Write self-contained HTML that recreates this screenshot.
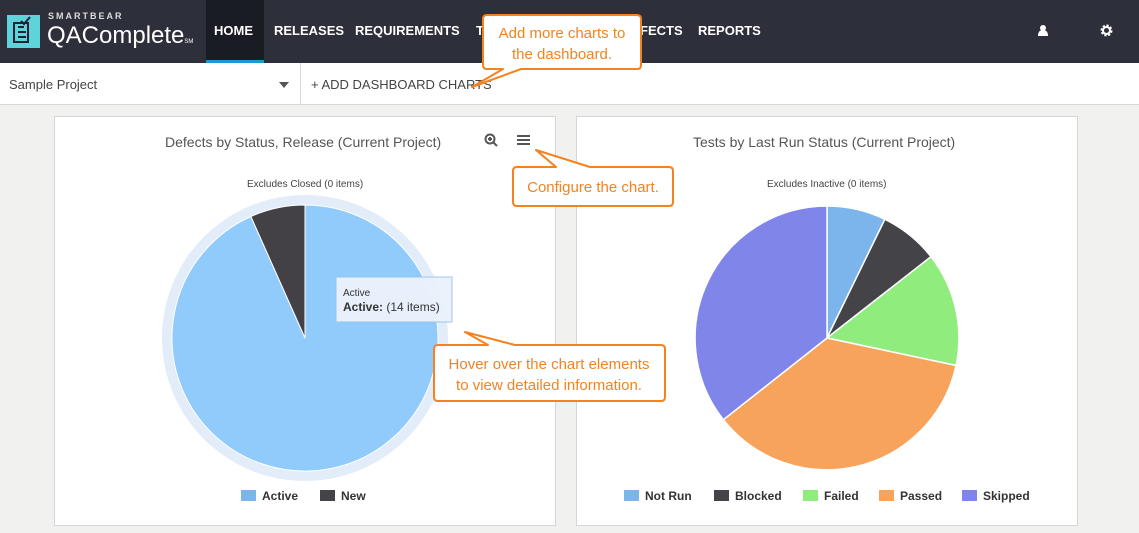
<!DOCTYPE html><html><head><style>
body{margin:0;width:1139px;height:533px;overflow:hidden;background:#f1f2ef;font-family:"Liberation Sans",sans-serif;position:relative}
.a{position:absolute}
.nav{left:0;top:0;width:1139px;height:63px;background:#2d2f3b}
.nl{color:#fff;font-weight:bold;font-size:13px;top:23px}
.sub{left:0;top:63px;width:1139px;height:41px;background:#fff;border-bottom:1px solid #d8d8d8}
.panel{background:#fff;border:1px solid #d6d6d6}
.t{font-size:14px;color:#555}
.leg{font-size:12px;font-weight:bold;color:#333;top:489px}
.sq{display:inline-block;width:15px;height:11px;margin-right:6px;vertical-align:-1px}
</style></head><body>
<div class="a nav"></div>
<div class="a" style="left:206px;top:0;width:58px;height:60px;background:#1a1c23"></div>
<div class="a" style="left:206px;top:60px;width:58px;height:4px;background:#1b9ad6"></div>
<div class="a" style="left:7px;top:15px;width:33px;height:33px;background:#5ed3dc"></div>
<svg class="a" style="left:7px;top:15px" width="33" height="33"><g stroke="#223" stroke-width="2" fill="none"><rect x="7" y="8" width="14" height="19"/><path d="M11 12h6M11 17h8M11 22h8M14 6l3 3 6-7"/></g></svg>
<div class="a" style="left:48px;top:11px;color:#ddd;font-size:9px;font-weight:bold;letter-spacing:2px">SMARTBEAR</div>
<div class="a" style="left:47px;top:22px;color:#fff;font-size:24px">QAComplete<span style="font-size:6px">SM</span></div>
<div class="a nl" style="left:214px">HOME</div>
<div class="a nl" style="left:274px">RELEASES</div>
<div class="a nl" style="left:355px">REQUIREMENTS</div>
<div class="a nl" style="left:476px">T</div>
<div class="a nl" style="left:640px">FECTS</div>
<div class="a nl" style="left:698px">REPORTS</div>
<svg class="a" style="left:1037px;top:24px" width="12" height="13"><circle cx="6" cy="4" r="3" fill="#fff"/><path d="M1 12q0-6 5-6t5 6z" fill="#fff"/></svg>
<svg class="a" style="left:1100px;top:24px" width="13" height="13"><circle cx="6.5" cy="6.5" r="4.5" fill="none" stroke="#fff" stroke-width="3" stroke-dasharray="2 1.5"/><circle cx="6.5" cy="6.5" r="3.5" fill="none" stroke="#fff" stroke-width="2"/></svg>
<div class="a sub"></div>
<div class="a" style="left:300px;top:63px;width:1px;height:41px;background:#d8d8d8"></div>
<div class="a" style="left:9px;top:77px;font-size:13px;color:#444">Sample Project</div>
<div class="a" style="left:279px;top:82px;border:5px solid transparent;border-top:6px solid #555"></div>
<div class="a" style="left:311px;top:77px;font-size:13px;color:#444">+ ADD DASHBOARD CHARTS</div>
<div class="a panel" style="left:54px;top:116px;width:500px;height:408px"></div>
<div class="a panel" style="left:576px;top:116px;width:500px;height:408px"></div>
<div class="a t" style="left:165px;top:134px">Defects by Status, Release (Current Project)</div>
<div class="a t" style="left:693px;top:134px">Tests by Last Run Status (Current Project)</div>
<div class="a" style="left:247px;top:179px;font-size:10px;color:#444">Excludes Closed (0 items)</div>
<div class="a" style="left:767px;top:179px;font-size:10px;color:#444">Excludes Inactive (0 items)</div>
<svg class="a" style="left:484px;top:133px" width="14" height="14"><circle cx="6" cy="6" r="4.5" fill="none" stroke="#555" stroke-width="2"/><path d="M9 9l4 4M4 6h4M6 4v4" stroke="#555" stroke-width="2"/></svg>
<svg class="a" style="left:517px;top:134px" width="13" height="12"><path d="M0 2h13M0 6h13M0 10h13" stroke="#555" stroke-width="2"/></svg>
<svg class="a" style="left:0;top:0" width="1139" height="533">
<circle cx="305" cy="338" r="143" fill="#e2edf9"/>
<path d="M305 338L305 205A133 133 0 1 1 250.9 216.5Z" fill="#90cbfb" stroke="#fff"/>
<path d="M305 338L250.9 216.5A133 133 0 0 1 305 205Z" fill="#434046" stroke="#fff"/>
<g stroke="#fff" stroke-width="1.5">
<path d="M827 338L827 206A132 132 0 0 1 884.9 219.3Z" fill="#7cb5ec"/>
<path d="M827 338L884.9 219.3A132 132 0 0 1 931 256.7Z" fill="#434348"/>
<path d="M827 338L931 256.7A132 132 0 0 1 956 365.5Z" fill="#90ed7d"/>
<path d="M827 338L956 365.5A132 132 0 0 1 723.4 419.7Z" fill="#f7a35c"/>
<path d="M827 338L723.4 419.7A132 132 0 0 1 827 206Z" fill="#8085e9"/>
</g>
<rect x="336" y="277" width="116" height="45" fill="#eaf2fc" stroke="#9cc3ee" opacity=".97"/>
<text x="343" y="296" font-size="10" fill="#333" font-family="Liberation Sans">Active</text>
<text x="343" y="311" font-size="12" fill="#333" font-family="Liberation Sans"><tspan font-weight="bold">Active:</tspan> (14 items)</text>
<g fill="#fff" stroke="#f5821f" stroke-width="2" stroke-linejoin="round">
<path d="M487 15H637q4 0 4 4v46q0 4-4 4H521L472 87L503 69H487q-4 0-4-4v-46q0-4 4-4z"/>
<path d="M517 167H556L536 150L590 167H669q4 0 4 4v31q0 4-4 4H517q-4 0-4-4v-31q0-4 4-4z"/>
<path d="M438 345H488L465 332L515 345H661q4 0 4 4v48q0 4-4 4H438q-4 0-4-4v-48q0-4 4-4z"/>
</g>
<g fill="#f5821f" font-size="15" font-family="Liberation Sans" text-anchor="middle">
<text x="562" y="38">Add more charts to</text><text x="562" y="59">the dashboard.</text>
<text x="593" y="192">Configure the chart.</text>
<text x="549" y="369">Hover over the chart elements</text><text x="549" y="390">to view detailed information.</text>
</g>
</svg>
<div class="a leg" style="left:241px"><span class="sq" style="background:#7cb5ec"></span>Active</div>
<div class="a leg" style="left:320px"><span class="sq" style="background:#434348"></span>New</div>
<div class="a leg" style="left:624px"><span class="sq" style="background:#7cb5ec"></span>Not Run</div>
<div class="a leg" style="left:714px"><span class="sq" style="background:#434348"></span>Blocked</div>
<div class="a leg" style="left:803px"><span class="sq" style="background:#90ed7d"></span>Failed</div>
<div class="a leg" style="left:879px"><span class="sq" style="background:#f7a35c"></span>Passed</div>
<div class="a leg" style="left:962px"><span class="sq" style="background:#8085e9"></span>Skipped</div>
</body></html>
